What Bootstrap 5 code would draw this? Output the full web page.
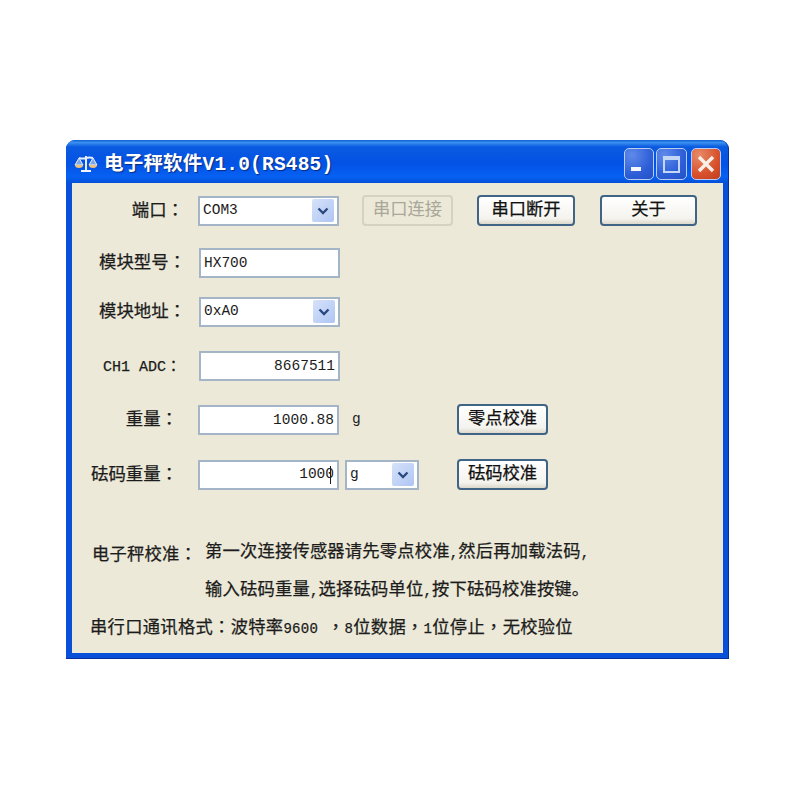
<!DOCTYPE html>
<html lang="zh-CN">
<head>
    <meta charset="UTF-8">
    <meta name="viewport" content="width=device-width, initial-scale=1.0">
    <title>电子秤软件V1.0(RS485)</title>
    <link rel="stylesheet" href="https://cdn.jsdelivr.net/npm/bootstrap@5.3.3/dist/css/bootstrap.min.css">
    <style>
        body { background: #fff; font-family: "Liberation Mono", "Noto Sans CJK SC", monospace; color: #1c1c1c; }
        .xp-page { padding: 140px 0 0 66px; }
        .xp-window { width: 663px; height: 519px; background: #0a4fd8; border-radius: 9px 9px 0 0; border-right: 1px solid #0a2f9c; border-bottom: 1px solid #0a2f9c; }
        .xp-title { height: 43px; padding: 5px 7px 0 8px; background: linear-gradient(#0e5fd6 0, #3a90f0 6%, #0a5ae0 16%, #0352e6 55%, #0661f2 85%, #0550d8 100%); border-radius: 9px 9px 0 0; }
        .xp-title-text { font-size: 19.5px; font-weight: 700; color: #fff; margin: 3px 0 0 6px; letter-spacing: .2px; text-shadow: 1px 1px 1px #0a2a80; }
        .win-btn { width: 31px; height: 32px; border: 1px solid #b8cdf5; border-radius: 5px; background: radial-gradient(circle at 25% 20%, #5f8aea, #2e5fd8 60%, #2450c4); }
        .win-btn.win-first { width: 30px; margin-right: -2px; }
        .win-btn.win-close { width: 30px; background: radial-gradient(circle at 25% 20%, #e88a68, #d8512c 60%, #bf3f1e); }
        .win-min-bar { width: 10px; height: 4px; background: #f4f7fd; margin: 18px 0 0 6px; }
        .win-max-box { width: 17px; height: 17px; border: 2px solid #c4d6f6; border-top-width: 4px; margin: 7px 0 0 6px; }
        .xp-client { margin: 0 5px 5px 6px; height: 470px; background: #ece9d8; padding-top: 12px; }
        .xp-row { height: 31px; }
        .xp-label { width: 127px; padding-right: 13px; text-align: right; font-size: 17.4px; line-height: 1; -webkit-text-stroke: .25px #1c1c1c; }
        .xp-label.tight { width: 126px; padding-right: 20px; }
        .xp-label.first { width: 126px; padding-right: 14px; }
        .xp-label.adc { width: 127px; padding-right: 18px; font-size: 15px; }
        .colon { font-family: "Noto Sans CJK TC", sans-serif; }
        .xp-field { width: 141px; height: 30px; border: 2px solid #a3b5c6; background: #fff; font-size: 14.5px; font-family: "Liberation Mono", monospace; color: #1c1c1c; border-radius: 0; padding: 0 3px; box-shadow: none; }
        .xp-field.unit-select { width: 74px; margin-left: 6px; }
        .xp-arrow { width: 22px; height: 23px; margin-left: auto; border-radius: 2px; background: linear-gradient(135deg, #d6e2fa, #aec5f3); }
        .text-caret { width: 1px; height: 18px; margin-left: -4px; margin-right: 3px; background: #1c1c1c; }
        .xp-btn { height: 31px; padding: 0; font-size: 17.3px; line-height: 1; -webkit-text-stroke: .25px #111; color: #111; border: 2px solid #3f6486; border-radius: 4px; background: linear-gradient(#fff, #f4f3ee 80%, #dcd8cb); }
        .xp-btn:disabled { color: #a9a69a; -webkit-text-stroke: 0; border-color: #d5d2c2; background: #ece9d8; opacity: 1; }
        .w-91 { width: 91px; }
        .w-97 { width: 97px; }
        .w-98 { width: 98px; }
        .xp-unit { width: 118px; padding-left: 13px; font-size: 14.5px; }
        .xp-note { font-size: 17.3px; line-height: 36px; white-space: nowrap; letter-spacing: .2px; -webkit-text-stroke: .25px #1c1c1c; }
        .note-head { width: 113px; }
        .note-first { padding-left: 20px; }
        .note-indent { padding-left: 133px; margin-top: -1px; }
        .note-last { padding-left: 18px; margin-top: -1px; letter-spacing: .3px; }
        .note-small { font-size: 14px; }
        .mt-18 { margin-top: 18px; }
        .mt-21 { margin-top: 21px; }
        .mt-23 { margin-top: 23px; }
        .mt-24 { margin-top: 24px; }
        .mt-45 { margin-top: 45px; }
        .ms-23 { margin-left: 23px; }
        .ms-24 { margin-left: 24px; }
        .ms-25 { margin-left: 25px; }
        .ms-38 { margin-left: 38px; }
    </style>
</head>
<body>
    <div class="xp-page">
        <div class="xp-window d-flex flex-column">
            <div class="xp-title d-flex align-items-center">
                <svg width="24" height="18" viewBox="0 0 24 18">
                    <path d="M12 1v14M5 3c3 1 4 1 7 0s4-1 7 0" stroke="#e4eefc" stroke-width="2" fill="none"/>
                    <path d="M5 3L1 10h8zM19 3l-4 7h8z" fill="#7fa8e8" stroke="#e4eefc" stroke-width="1"/>
                    <path d="M1 10a4 3 0 0 0 8 0zM15 10a4 3 0 0 0 8 0z" fill="#eec27a"/>
                    <path d="M7 15h10v2H7z" fill="#f2f5fb"/>
                </svg>
                <span class="xp-title-text">电子秤软件V1.0(RS485)</span>
                <div class="ms-auto d-flex gap-1">
                    <div class="win-btn win-first"><div class="win-min-bar"></div></div>
                    <div class="win-btn"><div class="win-max-box"></div></div>
                    <div class="win-btn win-close d-flex align-items-center justify-content-center">
                        <svg width="20" height="20" viewBox="0 0 20 20"><path d="M3 3l14 14M17 3L3 17" stroke="#f8efe9" stroke-width="3.400"/></svg>
                    </div>
                </div>
            </div>
            <div class="xp-client">
                <div class="xp-row d-flex align-items-center">
                    <div class="xp-label first">端口<span class="colon" lang="zh-TW">：</span></div>
                    <div class="xp-field d-flex align-items-center">COM3
                        <div class="xp-arrow d-flex align-items-center justify-content-center">
                            <svg width="12" height="8" viewBox="0 0 12 8"><path d="M1.500 1.500L6 6l4.500-4.500" stroke="#2b4a80" stroke-width="2.400" fill="none"/></svg>
                        </div>
                    </div>
                    <button class="btn xp-btn w-91 ms-23" type="button" disabled>串口连接</button>
                    <button class="btn xp-btn w-98 ms-24" type="button">串口断开</button>
                    <button class="btn xp-btn w-97 ms-25" type="button">关于</button>
                </div>
                <div class="xp-row d-flex align-items-center mt-21">
                    <div class="xp-label">模块型号<span class="colon" lang="zh-TW">：</span></div>
                    <input class="form-control xp-field" value="HX700">
                </div>
                <div class="xp-row d-flex align-items-center mt-18">
                    <div class="xp-label">模块地址<span class="colon" lang="zh-TW">：</span></div>
                    <div class="xp-field d-flex align-items-center">0xA0
                        <div class="xp-arrow d-flex align-items-center justify-content-center">
                            <svg width="12" height="8" viewBox="0 0 12 8"><path d="M1.500 1.500L6 6l4.500-4.500" stroke="#2b4a80" stroke-width="2.400" fill="none"/></svg>
                        </div>
                    </div>
                </div>
                <div class="xp-row d-flex align-items-center mt-23">
                    <div class="xp-label adc">CH1 ADC<span class="colon" lang="zh-TW">：</span></div>
                    <input class="form-control xp-field text-end" value="8667511">
                </div>
                <div class="xp-row d-flex align-items-center mt-23">
                    <div class="xp-label tight">重量<span class="colon" lang="zh-TW">：</span></div>
                    <input class="form-control xp-field text-end" value="1000.88">
                    <span class="xp-unit">g</span>
                    <button class="btn xp-btn w-91" type="button">零点校准</button>
                </div>
                <div class="xp-row d-flex align-items-center mt-24">
                    <div class="xp-label tight">砝码重量<span class="colon" lang="zh-TW">：</span></div>
                    <div class="xp-field d-flex align-items-center justify-content-end">1000<span class="text-caret"></span></div>
                    <div class="xp-field unit-select d-flex align-items-center">g
                        <div class="xp-arrow d-flex align-items-center justify-content-center">
                            <svg width="12" height="8" viewBox="0 0 12 8"><path d="M1.500 1.500L6 6l4.500-4.500" stroke="#2b4a80" stroke-width="2.400" fill="none"/></svg>
                        </div>
                    </div>
                    <button class="btn xp-btn w-91 ms-38" type="button">砝码校准</button>
                </div>
                <div class="xp-note mt-45 d-flex note-first">
                    <span class="note-head">电子秤校准<span class="colon" lang="zh-TW">：</span></span>
                    <span>第一次连接传感器请先零点校准<span class="note-small">,</span>然后再加载法码<span class="note-small">,</span></span>
                </div>
                <div class="xp-note note-indent">输入砝码重量<span class="note-small">,</span>选择砝码单位<span class="note-small">,</span>按下砝码校准按键。</div>
                <div class="xp-note note-last">串行口通讯格式<span class="colon" lang="zh-TW">：</span>波特率<span class="note-small">9600 </span><span class="colon" lang="zh-TW">，</span><span class="note-small">8</span>位数据<span class="colon" lang="zh-TW">，</span><span class="note-small">1</span>位停止<span class="colon" lang="zh-TW">，</span>无校验位</div>
            </div>
        </div>
    </div>
    <script src="https://cdn.jsdelivr.net/npm/bootstrap@5.3.3/dist/js/bootstrap.bundle.min.js"></script>
</body>
</html>
